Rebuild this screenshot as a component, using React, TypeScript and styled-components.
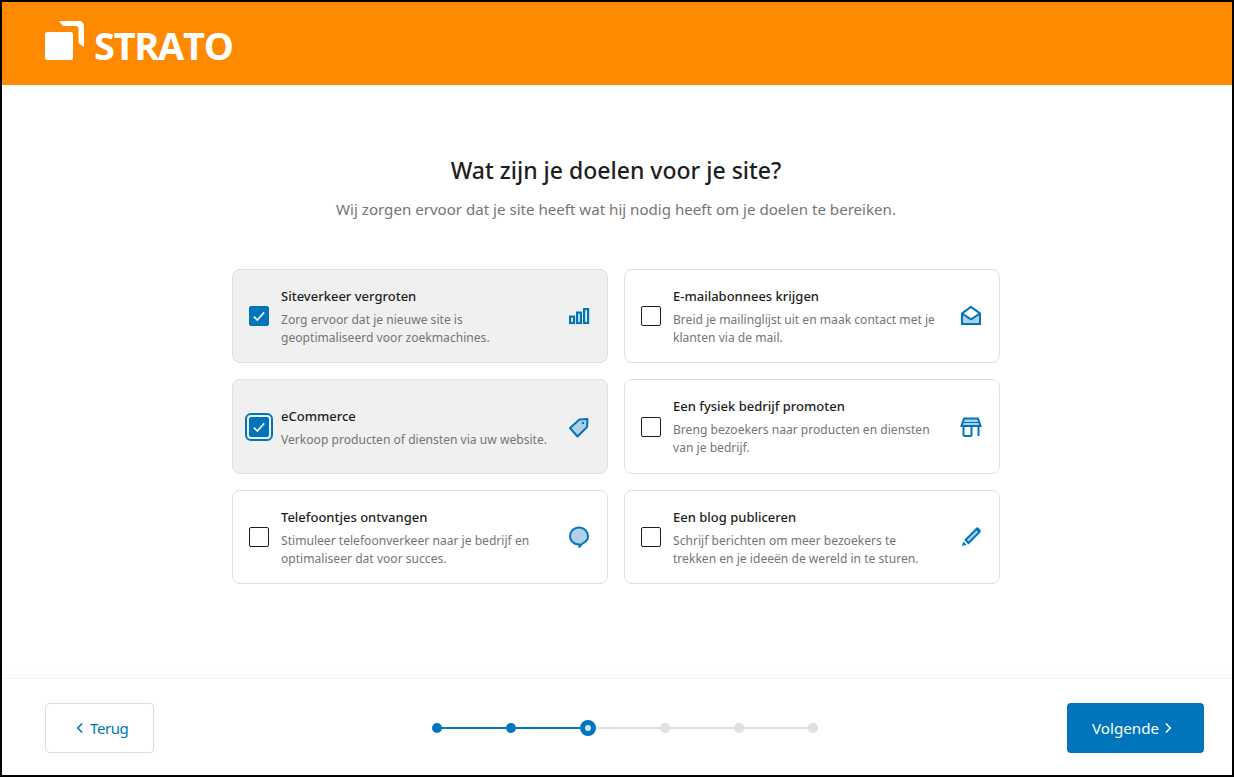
import React from "react";
import styled, { createGlobalStyle } from "styled-components";

const Global = createGlobalStyle`
  html, body { margin: 0; padding: 0; background: #fff; }
  #root { width: 1234px; height: 777px; }
  * { box-sizing: border-box; }
`;

const Frame = styled.div`
  width: 1234px;
  height: 777px;
  border: 2px solid #000;
  display: flex;
  flex-direction: column;
  font-family: "Noto Sans", "Open Sans", sans-serif;
  background: #fff;
  overflow: hidden;
`;

const Header = styled.header`
  height: 83px;
  flex: none;
  background: #ff8a00;
  display: flex;
  align-items: flex-start;
  padding: 19px 0 0 43px;
`;

const LogoMark = styled.svg`
  width: 40px;
  height: 40px;
  flex: none;
`;

const LogoText = styled.span`
  font-family: "Open Sans", sans-serif;
  font-weight: 700;
  font-size: 38px;
  line-height: 40px;
  color: #fff;
  margin-left: 9px;
  margin-top: 4px;
  letter-spacing: -1.3px;
`;

const Main = styled.main`
  flex: 1;
  display: flex;
  flex-direction: column;
  align-items: center;
  padding: 67px 2px 0 0;
`;

const Title = styled.h1`
  margin: 0;
  font-size: 23px;
  line-height: 36px;
  font-weight: 500;
  color: #1e1e1e;
`;

const Subtitle = styled.p`
  margin: 9px 0 0;
  font-size: 15.1px;
  line-height: 24px;
  color: #757575;
`;

const Grid = styled.div`
  margin-top: 48px;
  width: 768px;
  display: grid;
  grid-template-columns: 376px 376px;
  grid-template-rows: 94px 95px 94px;
  gap: 16px;
`;

const Card = styled.div<{ $selected?: boolean }>`
  border: 1px solid #e0e0e0;
  border-radius: 8px;
  background: ${(p) => (p.$selected ? "#f0f0f0" : "#fff")};
  display: flex;
  align-items: center;
  padding: 0 16px;
`;

const Box = styled.span<{ $checked?: boolean; $focused?: boolean }>`
  width: 20px;
  height: 20px;
  flex: none;
  border-radius: 2px;
  border: 1px solid ${(p) => (p.$checked ? "#0075bc" : "#1e1e1e")};
  background: ${(p) => (p.$checked ? "#0075bc" : "#fff")};
  display: flex;
  align-items: center;
  justify-content: center;
  outline: ${(p) => (p.$focused ? "2px solid #0075bc" : "none")};
  outline-offset: 2px;
`;

const CardText = styled.div<{ $single?: boolean }>`
  flex: 1;
  margin-left: 12px;
  min-width: 0;
  padding-top: ${(p) => (p.$single ? "3px" : "1px")};
`;

const CardTitle = styled.div`
  font-size: 13px;
  line-height: 18px;
  font-weight: 500;
  color: #1e1e1e;
  margin-bottom: 6px;
`;

const CardDesc = styled.div`
  font-size: 12.1px;
  line-height: 18px;
  color: #757575;
  white-space: pre-line;
`;

const IconSlot = styled.svg`
  width: 24px;
  height: 24px;
  flex: none;
  margin-left: 8px;
`;

const Footer = styled.footer`
  height: 97px;
  flex: none;
  border-top: 1px solid #eeeeee;
  box-shadow: 0 -10px 16px rgba(0, 0, 0, 0.012);
  display: flex;
  align-items: center;
  padding: 2px 28px 0 43px;
`;

const BackButton = styled.button`
  width: 109px;
  height: 50px;
  border: 1px solid #ddd;
  border-radius: 4px;
  background: #fff;
  color: #0075bc;
  font: 400 15px "Noto Sans", sans-serif;
  letter-spacing: -0.4px;
  display: flex;
  align-items: center;
  gap: 6px;
  padding: 0 0 0 30px;
`;

const NextButton = styled.button`
  width: 137px;
  height: 50px;
  border: 0;
  border-radius: 4px;
  background: #0075bc;
  color: #fff;
  font: 400 15.2px "Noto Sans", sans-serif;
  display: flex;
  align-items: center;
  gap: 5px;
  padding: 0 0 0 25px;
  margin-left: auto;
`;

const Stepper = styled.div`
  display: flex;
  align-items: center;
  margin-left: 278px;
`;

const Dot = styled.span<{ $state: "done" | "current" | "todo" }>`
  flex: none;
  border-radius: 50%;
  width: ${(p) => (p.$state === "current" ? "16px" : "10px")};
  height: ${(p) => (p.$state === "current" ? "16px" : "10px")};
  background: ${(p) =>
    p.$state === "todo" ? "#e0e0e0" : p.$state === "current" ? "#d5e6f3" : "#0075bc"};
  border: ${(p) => (p.$state === "current" ? "5px solid #0075bc" : "none")};
`;

const Line = styled.span<{ $active?: boolean }>`
  width: 64px;
  height: 2px;
  flex: none;
  background: ${(p) => (p.$active ? "#0075bc" : "#e0e0e0")};
`;

const Chevron = ({ dir }: { dir: "left" | "right" }) => (
  <svg width="8" height="12" viewBox="0 0 8 12" fill="none" stroke="currentColor" strokeWidth="1.6">
    <path d={dir === "left" ? "M6 1.5 1.8 6 6 10.5" : "M2 1.5 6.2 6 2 10.5"} />
  </svg>
);

const BLUE = "#0075bc";
const TINT = "#aed1e8";

const BarsIcon = () => (
  <IconSlot viewBox="0 0 24 24" fill="none" stroke={BLUE} strokeWidth="2.2">
    <rect x="3.100" y="12.600" width="4" height="6.400" />
    <rect x="10.100" y="8.600" width="3.800" height="10.400" />
    <rect x="17.100" y="5.100" width="4" height="13.900" />
  </IconSlot>
);

const TagIcon = () => (
  <IconSlot viewBox="0 0 24 24">
    <path d="M3 13 12.500 4.500 20.500 4 20 12 10.500 21.500Z" fill={TINT} stroke={BLUE} strokeWidth="2" strokeLinejoin="round" />
    <circle cx="16" cy="8" r="1.200" fill={BLUE} />
  </IconSlot>
);

const BubbleIcon = () => (
  <IconSlot viewBox="0 0 24 24">
    <path d="M12 2.600c-5 0-9 3.500-9 8.400s4 8.400 8.200 8.400c.4 0 .8 0 1.200-.1v2.600l3.300-3.500c3-1.400 5.300-4 5.300-7.400 0-4.900-4-8.400-9-8.400Z" fill={TINT} stroke={BLUE} strokeWidth="2" strokeLinejoin="round" />
  </IconSlot>
);

const MailIcon = () => (
  <IconSlot viewBox="0 0 24 24">
    <path d="M3 9.500 12 3l9 6.500v10.500H3Z" fill={TINT} stroke={BLUE} strokeWidth="2" />
    <path d="M3 9.500 12 3l9 6.500-9 5.800Z" fill="#fff" stroke={BLUE} strokeWidth="2" strokeLinejoin="round" />
  </IconSlot>
);

const StoreIcon = () => (
  <IconSlot viewBox="0 0 24 24">
    <path d="M5 3.500h14l2.500 7.500h-19Z" fill={TINT} />
    <path d="M4.500 3.500h15M5 3.500 2.500 11h19L19 3.500M4.500 11v10M19.500 11v10M4.500 21h8M12.500 11v10" fill="none" stroke={BLUE} strokeWidth="2" />
    <path d="M4.500 7.500h15" stroke={BLUE} strokeWidth="1" />
  </IconSlot>
);

const PenIcon = () => (
  <IconSlot viewBox="0 0 24 24">
    <path d="M6.500 15 17.500 4l3 3-11 11Z" fill={TINT} stroke={BLUE} strokeWidth="2" />
    <path d="M17 3.500 18.500 2l3.500 3.500L20.500 7Z" fill={BLUE} />
    <path d="M3 21l1.200-4.500 3.300 3.300Z" fill={BLUE} />
  </IconSlot>
);

const Check = () => (
  <svg width="16" height="16" viewBox="0 0 14 14" fill="none" stroke="#fff" strokeWidth="1.400">
    <path d="M2.500 7.500 5.500 10.500 11.500 3.800" />
  </svg>
);

type Goal = {
  title: string;
  desc: string;
  icon: React.ReactNode;
  checked?: boolean;
  focused?: boolean;
};

const goals: Goal[] = [
  { title: "Siteverkeer vergroten", desc: "Zorg ervoor dat je nieuwe site is\ngeoptimaliseerd voor zoekmachines.", icon: <BarsIcon />, checked: true },
  { title: "E-mailabonnees krijgen", desc: "Breid je mailinglijst uit en maak contact met je\nklanten via de mail.", icon: <MailIcon /> },
  { title: "eCommerce", desc: "Verkoop producten of diensten via uw website.", icon: <TagIcon />, checked: true, focused: true },
  { title: "Een fysiek bedrijf promoten", desc: "Breng bezoekers naar producten en diensten\nvan je bedrijf.", icon: <StoreIcon /> },
  { title: "Telefoontjes ontvangen", desc: "Stimuleer telefoonverkeer naar je bedrijf en\noptimaliseer dat voor succes.", icon: <BubbleIcon /> },
  { title: "Een blog publiceren", desc: "Schrijf berichten om meer bezoekers te\ntrekken en je ideeën de wereld in te sturen.", icon: <PenIcon /> },
];

const steps: ("done" | "current" | "todo")[] = ["done", "done", "current", "todo", "todo", "todo"];

export default function App() {
  return (
    <>
      <Global />
      <Frame>
        <Header>
          <LogoMark viewBox="0 0 40 40">
            <rect x="0" y="11" width="28" height="28" rx="2.500" fill="#fff" />
            <path d="M14 0H34a5 5 0 0 1 5 5V26L33.500 22V8a3 3 0 0 0-3-3H18Z" fill="#fff" />
          </LogoMark>
          <LogoText>STRATO</LogoText>
        </Header>
        <Main>
          <Title>Wat zijn je doelen voor je site?</Title>
          <Subtitle>Wij zorgen ervoor dat je site heeft wat hij nodig heeft om je doelen te bereiken.</Subtitle>
          <Grid>
            {goals.map((g) => (
              <Card key={g.title} $selected={g.checked}>
                <Box $checked={g.checked} $focused={g.focused}>
                  {g.checked && <Check />}
                </Box>
                <CardText $single={!g.desc.includes("\n")}>
                  <CardTitle>{g.title}</CardTitle>
                  <CardDesc>{g.desc}</CardDesc>
                </CardText>
                {g.icon}
              </Card>
            ))}
          </Grid>
        </Main>
        <Footer>
          <BackButton>
            <Chevron dir="left" />
            Terug
          </BackButton>
          <Stepper>
            {steps.map((s, i) => (
              <React.Fragment key={i}>
                <Dot $state={s} />
                {i < steps.length - 1 && <Line $active={i < 2} />}
              </React.Fragment>
            ))}
          </Stepper>
          <NextButton>
            Volgende
            <Chevron dir="right" />
          </NextButton>
        </Footer>
      </Frame>
    </>
  );
}
